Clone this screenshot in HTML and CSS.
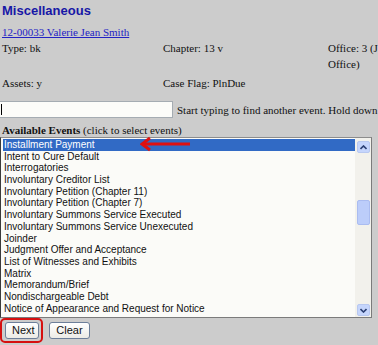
FILE: index.html
```html
<!DOCTYPE html>
<html>
<head>
<meta charset="utf-8">
<link rel="stylesheet" href="styles.css">
</head>
<body>
<div class="page">
  <h1 class="title">Miscellaneous</h1>
  <div class="case"><a href="#" class="case-link">12-00033 Valerie Jean Smith</a></div>
  <div class="info">
    <div class="cell">Type: bk</div>
    <div class="cell">Chapter: 13 v</div>
    <div class="cell office">Office: 3 (Jacksonville Office)</div>
    <div class="cell">Assets: y</div>
    <div class="cell">Case Flag: PlnDue</div>
    <div class="cell"></div>
  </div>
  <div class="search">
    <div class="search-input"><span class="caret"></span></div>
    <span class="hint">Start typing to find another event. Hold down the Ctrl key to select multiple events.</span>
  </div>
  <div class="label"><b>Available Events</b> (click to select events)</div>
  <div class="listbox">
    <div class="items">
      <div class="item selected">Installment Payment</div>
      <div class="item">Intent to Cure Default</div>
      <div class="item">Interrogatories</div>
      <div class="item">Involuntary Creditor List</div>
      <div class="item">Involuntary Petition (Chapter 11)</div>
      <div class="item">Involuntary Petition (Chapter 7)</div>
      <div class="item">Involuntary Summons Service Executed</div>
      <div class="item">Involuntary Summons Service Unexecuted</div>
      <div class="item">Joinder</div>
      <div class="item">Judgment Offer and Acceptance</div>
      <div class="item">List of Witnesses and Exhibits</div>
      <div class="item">Matrix</div>
      <div class="item">Memorandum/Brief</div>
      <div class="item">Nondischargeable Debt</div>
      <div class="item">Notice of Appearance and Request for Notice</div>
    </div>
    <div class="scrollbar">
      <div class="sb-btn sb-up">
        <svg width="7" height="5" viewBox="0 0 7 5"><path d="M0.5 4 L3.5 1 L6.5 4" fill="none" stroke="#2b3f73" stroke-width="1.6"/></svg>
      </div>
      <div class="sb-track">
        <div class="sb-thumb"></div>
      </div>
      <div class="sb-btn sb-down">
        <svg width="7" height="5" viewBox="0 0 7 5"><path d="M0.5 1 L3.5 4 L6.5 1" fill="none" stroke="#2b3f73" stroke-width="1.6"/></svg>
      </div>
    </div>
    <svg class="arrow" width="52" height="16" viewBox="0 0 52 16">
      <path d="M3 8 L50 8" stroke="#e01010" stroke-width="3" fill="none"/>
      <path d="M10 2 L2 8 L10 14" stroke="#e01010" stroke-width="3" fill="none" stroke-linejoin="miter"/>
    </svg>
  </div>
  <div class="buttons">
    <div class="next-wrap"><button class="btn">Next</button></div>
    <button class="btn">Clear</button>
  </div>
</div>
</body>
</html>
```

FILE: styles.css
```css
html, body {
  margin: 0;
  padding: 0;
  overflow: hidden;
  background: #cccccc;
}
body {
  width: 378px;
  height: 345px;
  font-family: "Liberation Serif", "Times New Roman", serif;
  font-size: 11px;
  color: #111;
}
.page {
  padding-left: 2px;
  width: 376px;
  overflow: hidden;
}
.title {
  margin: 0;
  padding-top: 3px;
  font-family: "Liberation Sans", Arial, sans-serif;
  font-size: 13px;
  font-weight: bold;
  line-height: 16px;
  color: #1717a6;
}
.case {
  margin-top: 5px;
  line-height: 16px;
}
.case-link {
  color: #2323c4;
  text-decoration: underline;
}
.info {
  display: grid;
  grid-template-columns: 161px 165px 118px;
  row-gap: 3px;
  line-height: 16px;
  width: 460px;
}
.office {
  width: 118px;
}
.search {
  margin-top: 10px;
  margin-left: -2px;
  display: flex;
  align-items: center;
  height: 17px;
  white-space: nowrap;
}
.search-input {
  flex: none;
  width: 173px;
  height: 17px;
  box-sizing: border-box;
  background: #fcfcf9;
  border: 1px solid #a5acb2;
  border-left: none;
  display: flex;
  align-items: center;
}
.caret {
  display: block;
  width: 1px;
  height: 11px;
  margin-left: 1px;
  background: #000;
}
.hint {
  margin-left: 4px;
}
.label {
  margin-top: 5px;
  line-height: 14px;
}
.listbox {
  position: relative;
  margin-left: -2px;
  width: 372px;
  height: 181px;
  box-sizing: border-box;
  border: 1px solid #7b7b7b;
  border-left-color: #3a3a3a;
  border-top-color: #8c8c8c;
  background: #fbfbf8;
  display: flex;
}
.items {
  flex: 1;
  padding: 1px 0 0 2px;
  font-family: "Liberation Sans", Arial, sans-serif;
  font-size: 10px;
  color: #111;
}
.item {
  height: 11.7px;
  line-height: 11.7px;
  padding-left: 1px;
  white-space: nowrap;
}
.item.selected {
  background: #316ac5;
  color: #fff;
}
.scrollbar {
  flex: none;
  width: 16px;
  display: flex;
  flex-direction: column;
  background: #f2f1ec;
  padding: 3px 0 1px 2px;
  box-sizing: border-box;
}
.sb-btn {
  flex: none;
  width: 13px;
  height: 12px;
  box-sizing: border-box;
  border: 1px solid #b8c8f0;
  border-radius: 2px;
  background: #c5d5fc;
  display: flex;
  align-items: center;
  justify-content: center;
}
.sb-track {
  flex: 1;
  padding-top: 47px;
}
.sb-thumb {
  width: 13px;
  height: 25px;
  box-sizing: border-box;
  border: 1px solid #aabcf0;
  border-radius: 2px;
  background: #bccdfa;
}
.arrow {
  position: absolute;
  left: 139px;
  top: -2px;
}
.buttons {
  display: flex;
  align-items: center;
  gap: 6px;
  margin-top: 0;
  margin-left: -2px;
}
.next-wrap {
  border: 2px solid #d61010;
  border-radius: 5px;
  padding: 2px 2px 2px 3px;
}
.btn {
  font-family: "Liberation Sans", Arial, sans-serif;
  font-size: 11px;
  color: #111;
  height: 17px;
  padding: 0 6px;
  background: linear-gradient(#ffffff, #ecebe6);
  border: 1px solid #6d7f9a;
  border-radius: 3px;
  line-height: 15px;
}
.next-wrap .btn {
  width: 34px;
}
.buttons > .btn {
  width: 41px;
}
```
